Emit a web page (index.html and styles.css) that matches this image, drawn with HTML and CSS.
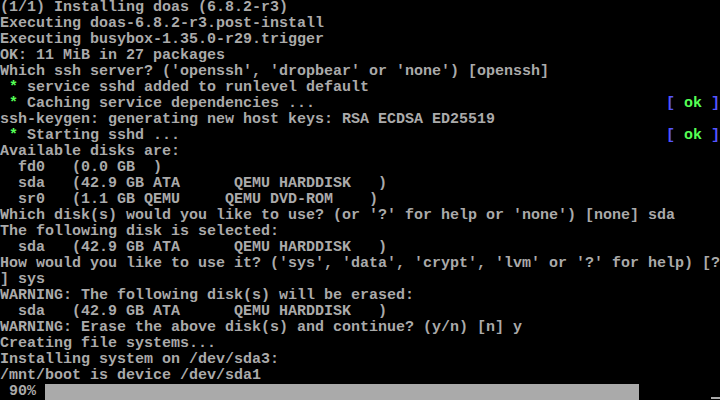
FILE: index.html
```html
<!DOCTYPE html>
<html>
<head>
<meta charset="utf-8">
<link rel="stylesheet" href="styles.css">
</head>
<body>
<div class="screen">
<div class="ln">(1/1) Installing doas (6.8.2-r3)</div>
<div class="ln">Executing doas-6.8.2-r3.post-install</div>
<div class="ln">Executing busybox-1.35.0-r29.trigger</div>
<div class="ln">OK: 11 MiB in 27 packages</div>
<div class="ln">Which ssh server? ('openssh', 'dropbear' or 'none') [openssh]</div>
<div class="ln"> <span class="g">*</span> service sshd added to runlevel default</div>
<div class="ln status"><span> <span class="g">*</span> Caching service dependencies ...</span><span><span class="b">[</span> <span class="g">ok</span> <span class="b">]</span></span></div>
<div class="ln">ssh-keygen: generating new host keys: RSA ECDSA ED25519</div>
<div class="ln status"><span> <span class="g">*</span> Starting sshd ...</span><span><span class="b">[</span> <span class="g">ok</span> <span class="b">]</span></span></div>
<div class="ln">Available disks are:</div>
<div class="ln">  fd0   (0.0 GB  )</div>
<div class="ln">  sda   (42.9 GB ATA      QEMU HARDDISK   )</div>
<div class="ln">  sr0   (1.1 GB QEMU     QEMU DVD-ROM    )</div>
<div class="ln">Which disk(s) would you like to use? (or '?' for help or 'none') [none] sda</div>
<div class="ln">The following disk is selected:</div>
<div class="ln">  sda   (42.9 GB ATA      QEMU HARDDISK   )</div>
<div class="ln">How would you like to use it? ('sys', 'data', 'crypt', 'lvm' or '?' for help) [?</div>
<div class="ln">] sys</div>
<div class="ln">WARNING: The following disk(s) will be erased:</div>
<div class="ln">  sda   (42.9 GB ATA      QEMU HARDDISK   )</div>
<div class="ln">WARNING: Erase the above disk(s) and continue? (y/n) [n] y</div>
<div class="ln">Creating file systems...</div>
<div class="ln">Installing system on /dev/sda3:</div>
<div class="ln">/mnt/boot is device /dev/sda1</div>
<div class="ln progress"><span class="pct"> 90% </span><span class="bar"></span><span class="gap"></span><span class="cursor"></span></div>
</div>
</body>
</html>
```
FILE: styles.css
```css
html, body {
  margin: 0;
  padding: 0;
  background: #000;
}
.screen {
  width: 720px;
  height: 400px;
  overflow: hidden;
  background: #000;
  color: #aaaaaa;
  font-family: "Liberation Mono", "DejaVu Sans Mono", monospace;
  font-size: 15px;
  font-weight: bold;
  line-height: 16px;
}
.ln {
  height: 16px;
  white-space: pre;
}
.status {
  display: flex;
  justify-content: space-between;
}
.g { color: #55ff55; }
.b { color: #5555ff; }
.progress {
  display: flex;
  align-items: stretch;
}
.pct {
  width: 45px;
}
.bar {
  width: 594px;
  height: 16px;
  background: #aaaaaa;
}
.gap {
  width: 72px;
}
.cursor {
  width: 9px;
  height: 2px;
  margin-top: 13px;
  background: #aaaaaa;
}
```
